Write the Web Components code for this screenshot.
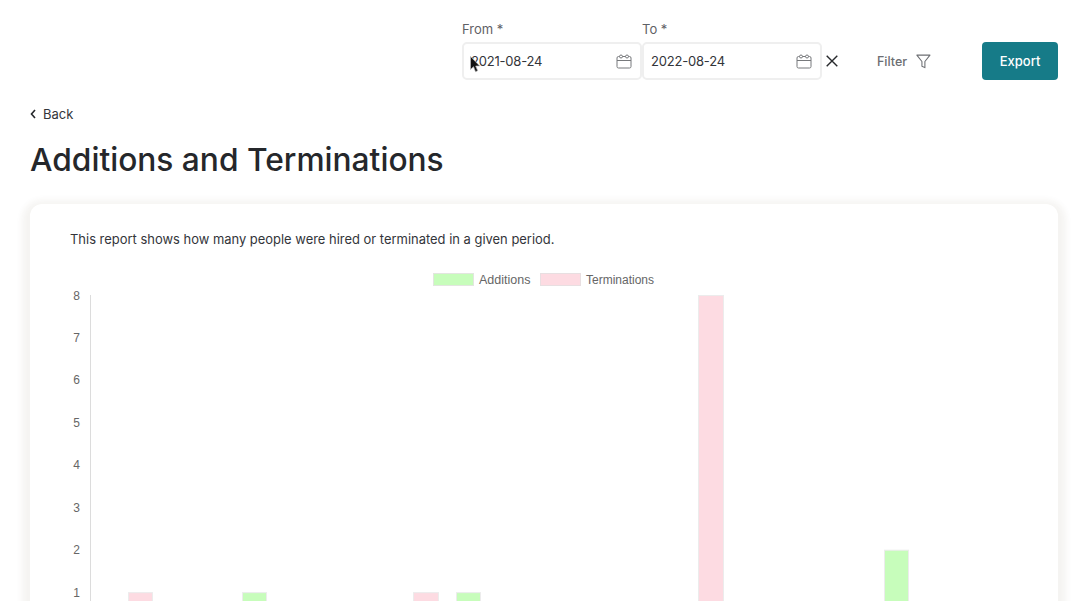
<!DOCTYPE html>
<html>
<head>
<meta charset="utf-8">
<title>Additions and Terminations</title>
<style>
  html, body { margin: 0; height: 100%; overflow: hidden; background: #fff; }
  body { font-family: "Inter", "Noto Sans", sans-serif; color: #25272b; }
</style>
</head>
<body>
<report-page></report-page>

<script>
class DateField extends HTMLElement {
    connectedCallback() {
        this.attachShadow({ mode: 'open' });
        this.shadowRoot.innerHTML = `
            <style>
                :host { display: flex; flex-direction: column; width: 180px; }
                label { font-size: 13px; line-height: 18px; color: #5f6166; margin-bottom: 4px; height: 18px; }
                .box {
                    box-sizing: border-box; height: 38px; border: 2px solid #efefef; border-radius: 5px;
                    display: flex; align-items: center; justify-content: space-between;
                    padding: 0 8px 0 7px; font-size: 13px; letter-spacing: -.2px; color: #33353a;
                }
                svg { display: block; }
            </style>
            <label>${this.getAttribute('label')} *</label>
            <div class="box">
                <span>${this.getAttribute('value')}</span>
                <svg width="16" height="15" viewBox="0 0 16 15" fill="none" stroke="#77797c" stroke-width="1">
                    <rect x="1" y="2.5" width="14" height="11.5" rx="1.5"/>
                    <path d="M1 6.5h14"/>
                    <circle cx="5" cy="2.5" r="1.5" fill="#fff"/>
                    <circle cx="11" cy="2.5" r="1.5" fill="#fff"/>
                </svg>
            </div>
        `;
    }
}
customElements.define('date-field', DateField);

class ReportToolbar extends HTMLElement {
    connectedCallback() {
        this.attachShadow({ mode: 'open' });
        this.shadowRoot.innerHTML = `
            <style>
                :host { display: flex; justify-content: flex-end; align-items: flex-end; padding: 20px 30px 0 0; position: relative; }
                .clear { width: 16px; height: 38px; margin-right: 39px; display: flex; align-items: center; justify-content: flex-end; }
                .filter { display: flex; align-items: center; gap: 9px; height: 38px; width: 54px; margin-right: 51px; font-size: 12.5px; font-weight: 500; color: #6c6e72; }
                .export {
                    box-sizing: border-box; width: 76px; height: 38px; border-radius: 4px; background: #167b88; color: #fff;
                    display: flex; align-items: center; justify-content: center; font-size: 13px; font-weight: 500;
                }
                .cursor { position: absolute; left: 470px; top: 56px; }
                svg { display: block; }
            </style>
            <date-field label="From" value="2021-08-24"></date-field>
            <date-field label="To" value="2022-08-24"></date-field>
            <div class="clear">
                <svg width="12" height="12" viewBox="0 0 12 12" fill="none" stroke="#27292c" stroke-width="1.4"><path d="M.7.7l10.6 10.6M11.3.7L.7 11.3"/></svg>
            </div>
            <div class="filter">
                <span>Filter</span>
                <svg width="15" height="15" viewBox="0 0 14 14" fill="none" stroke="#6c6e72" stroke-width="1" stroke-linejoin="round"><path d="M.8 1h12.4L8.4 7v5.8L5.6 11.4V7z"/></svg>
            </div>
            <div class="export">Export</div>
            <svg class="cursor" width="11" height="18" viewBox="0 0 11 18">
                <path d="M.5.5v13l3-2.8 2 5 2.2-1-2-4.700h4z" fill="#111" stroke="#bbb" stroke-width=".7"/>
            </svg>
        `;
    }
}
customElements.define('report-toolbar', ReportToolbar);

class BarChart extends HTMLElement {
    connectedCallback() {
        this.attachShadow({ mode: 'open' });
        const green = '#c7fdbb', pink = '#fddbe2';
        const top = 91, step = 42.45;
        // x positions relative to the card, value of each bar
        const bars = [
            [98, 25, 1, pink], [212, 25, 1, green], [383, 26, 1, pink],
            [426, 25, 1, green], [668, 26, 8, pink], [854, 25, 2, green]
        ];
        let ticks = '';
        for (let v = 8; v >= 1; v--) {
            const y = top + (8 - v) * step;
            ticks += `<text x="50" y="${y + 4.5}" text-anchor="end">${v}</text>`;
        }
        const rects = bars.map(([x, w, v, c]) => {
            const y = top + (8 - v) * step;
            return `<rect x="${x + .5}" y="${y + .5}" width="${w - 1}" height="400" fill="${c}" stroke="#ececec" stroke-width="1"/>`;
        }).join('');
        this.shadowRoot.innerHTML = `
            <style>
                :host { display: block; height: 397px; }
                svg { display: block; font-family: "Liberation Sans", Arial, sans-serif; font-size: 12px; fill: #666; }
            </style>
            <svg width="1028" height="397" viewBox="0 0 1028 397">
                <rect x="403.5" y="69.5" width="40" height="12" fill="${green}" stroke="#e2e6df"/>
                <text x="449" y="79.5" font-size="12.5">Additions</text>
                <rect x="510.5" y="69.5" width="40" height="12" fill="${pink}" stroke="#e8dfe1"/>
                <text x="556" y="79.5">Terminations</text>
                <path d="M60.5 91V397" stroke="#dcdcdc"/>
                ${ticks}
                ${rects}
            </svg>
        `;
    }
}
customElements.define('bar-chart', BarChart);

class ReportCard extends HTMLElement {
    connectedCallback() {
        this.attachShadow({ mode: 'open' });
        this.shadowRoot.innerHTML = `
            <style>
                :host {
                    display: block; margin: 0 30px; background: #fff; border-radius: 12px 12px 0 0;
                    box-shadow: 0 4px 6px 8px rgba(90, 70, 30, .06); height: 397px; position: relative;
                }
                p { margin: 0; padding: 26px 40px 0; font-size: 12.95px; line-height: 18px; color: #33353a; height: 18px; }
                bar-chart { margin-top: -44px; }
            </style>
            <p><slot></slot></p>
            <bar-chart></bar-chart>
        `;
    }
}
customElements.define('report-card', ReportCard);

class ReportPage extends HTMLElement {
    connectedCallback() {
        this.attachShadow({ mode: 'open' });
        this.shadowRoot.innerHTML = `
            <style>
                :host { display: block; height: 601px; overflow: hidden; }
                .back { display: flex; align-items: center; gap: 7px; margin: 24px 0 0 30px; height: 20px; font-size: 13px; color: #33353a; }
                h1 { margin: 16px 0 0 30px; font-size: 31.7px; line-height: 40px; font-weight: 500; color: #25272b; }
                report-card { margin-top: 24px; }
                svg { display: block; }
            </style>
            <report-toolbar></report-toolbar>
            <div class="back">
                <svg width="6" height="10" viewBox="0 0 6 10" fill="none" stroke="#25272b" stroke-width="1.6"><path d="M5 1L1.5 5 5 9"/></svg>
                <span>Back</span>
            </div>
            <h1>Additions and Terminations</h1>
            <report-card>This report shows how many people were hired or terminated in a given period.</report-card>
        `;
    }
}
customElements.define('report-page', ReportPage);
</script>
</body>
</html>
